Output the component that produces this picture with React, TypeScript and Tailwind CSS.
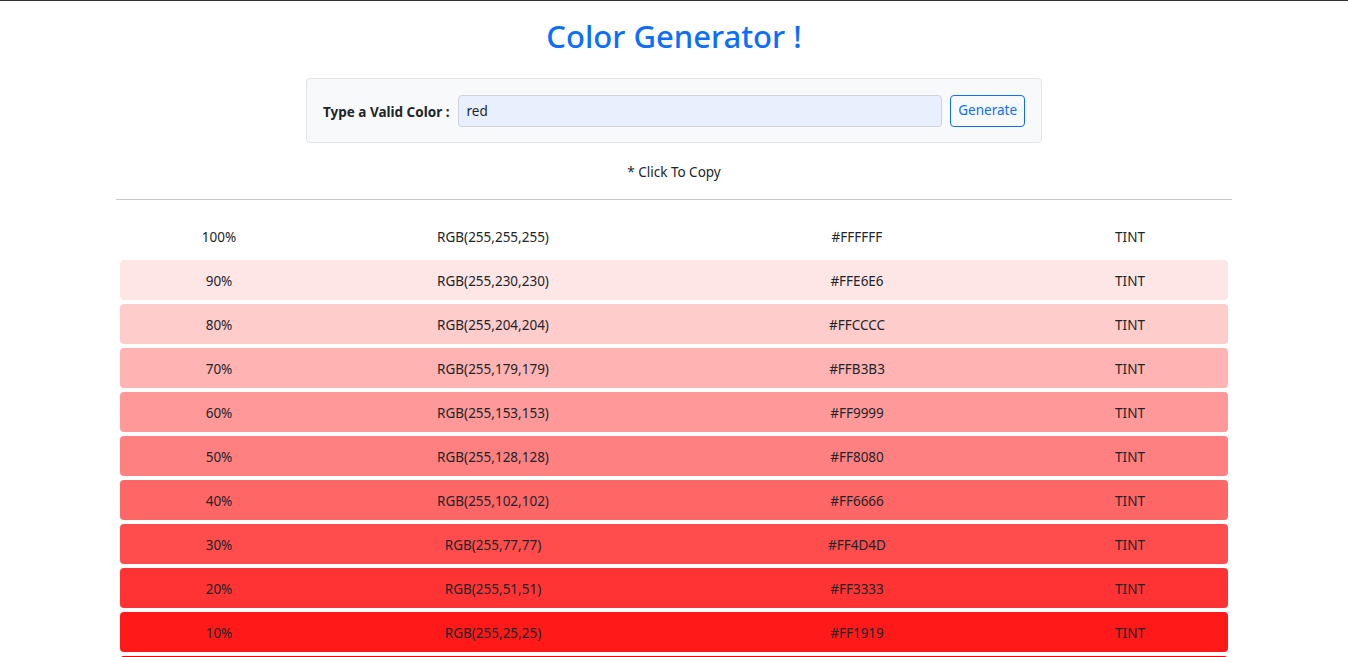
import React, { useState } from "react";

type Row = { pct: number; rgb: [number, number, number]; type: string };

const toHex = (n: number) => n.toString(16).padStart(2, "0").toUpperCase();

// sass-style mix, same rounding quirks as values.js
function mix(a: number[], b: number[], weight: number) {
  const w = weight * 2 - 1;
  const w1 = (w + 1) / 2;
  const w2 = 1 - w1;
  return a.map((c, i) => Math.round(c * w1 + b[i] * w2)) as [number, number, number];
}

function buildRows(): Row[] {
  const base = [255, 0, 0];
  const rows: Row[] = [];
  for (let p = 100; p >= 0; p -= 10) {
    rows.push({ pct: p, rgb: mix([255, 255, 255], base, p / 100), type: "TINT" });
  }
  for (let p = 10; p <= 100; p += 10) {
    rows.push({ pct: p, rgb: mix([0, 0, 0], base, p / 100), type: "SHADE" });
  }
  return rows;
}

export default function App() {
  const [color, setColor] = useState("red");
  const rows = buildRows();

  return (
    <div className="min-h-screen bg-white text-[#212529] font-['Noto_Sans','Open_Sans',sans-serif]">
      <div className="h-px bg-[#333]" />

      <div className="w-[1140px] mx-auto px-3">
        <h1 className="text-center text-[31px] font-medium text-[#0d6efd] mt-[12px] leading-[46px]">
          Color Generator !
        </h1>

        {/* form */}
        <div className="w-[736px] mx-auto mt-[19px] bg-[#f8f9fa] border border-[#e3e6e9] rounded flex items-center px-4 h-[65px]">
          <label className="text-[13.5px] font-bold mr-2 mt-[3px] whitespace-nowrap">Type a Valid Color :</label>
          <input
            value={color}
            onChange={(e) => setColor(e.target.value)}
            className="flex-1 h-[32px] bg-[#e8f0fe] border border-[#ced4da] rounded px-2 text-[13.5px] outline-none"
          />
          <button className="ml-2 h-[32px] px-[7px] border border-[#0d6efd] rounded text-[#0d6efd] text-[13.5px] bg-transparent">
            Generate
          </button>
        </div>

        <p className="text-center text-[13.5px] mt-[19px] leading-5">* Click To Copy</p>

        <hr className="mt-[17px] border-0 h-px bg-[#c8c8c8]" />

        <div className="mt-4 px-1 flex flex-col gap-1">
          {rows.map((r, i) => {
            const hex = "#" + r.rgb.map(toHex).join("");
            return (
              <div
                key={i}
                className="grid grid-cols-[198px_350px_378px_168px] h-10 pt-[2px] items-center rounded text-[13.5px] cursor-pointer"
                style={{ backgroundColor: hex }}
              >
                <span className="text-center">{r.pct}%</span>
                <span className="text-center">RGB({r.rgb.join(",")})</span>
                <span className="text-center">{hex}</span>
                <span className="text-center">{r.type}</span>
              </div>
            );
          })}
        </div>
      </div>
    </div>
  );
}
